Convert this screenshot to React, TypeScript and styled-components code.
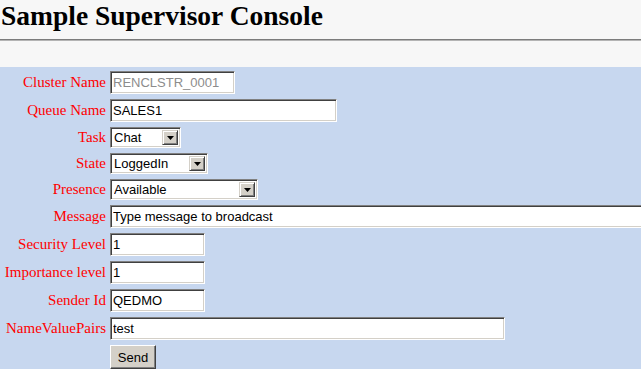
import React from "react";
import styled, { createGlobalStyle } from "styled-components";

type Field =
  | { kind: "text"; label: string; value: string; width: number; disabled?: boolean }
  | { kind: "select"; label: string; value: string; options: string[]; width: number };

const FIELDS: Field[] = [
  { kind: "text", label: "Cluster Name", value: "RENCLSTR_0001", width: 125, disabled: true },
  { kind: "text", label: "Queue Name", value: "SALES1", width: 227 },
  { kind: "select", label: "Task", value: "Chat", options: ["Chat", "Email", "Voice"], width: 71 },
  { kind: "select", label: "State", value: "LoggedIn", options: ["LoggedIn", "LoggedOut"], width: 98 },
  { kind: "select", label: "Presence", value: "Available", options: ["Available", "Busy", "Away"], width: 148 },
  { kind: "text", label: "Message", value: "Type message to broadcast", width: 560 },
  { kind: "text", label: "Security Level", value: "1", width: 95 },
  { kind: "text", label: "Importance level", value: "1", width: 95 },
  { kind: "text", label: "Sender Id", value: "QEDMO", width: 95 },
  { kind: "text", label: "NameValuePairs", value: "test", width: 395 },
];

export default function App() {
  return (
    <>
      <GlobalStyle />
      <Page>
        <Title>Sample Supervisor Console</Title>
        <Rule />
        <Panel>
          <Form onSubmit={(e) => e.preventDefault()}>
            {FIELDS.map((f) => (
              <React.Fragment key={f.label}>
                <Label>{f.label}</Label>
                {f.kind === "text" ? (
                  <TextBox
                    $w={f.width}
                    defaultValue={f.value}
                    disabled={f.disabled}
                  />
                ) : (
                  <SelectBox $w={f.width}>
                    <SelectField defaultValue={f.value}>
                      {f.options.map((o) => (
                        <option key={o}>{o}</option>
                      ))}
                    </SelectField>
                    <ArrowButton>
                      <svg width="7" height="4" viewBox="0 0 7 4">
                        <path d="M0 0h7L3.5 4z" fill="#000" />
                      </svg>
                    </ArrowButton>
                  </SelectBox>
                )}
              </React.Fragment>
            ))}
            <span />
            <SendButton type="submit">Send</SendButton>
          </Form>
        </Panel>
      </Page>
    </>
  );
}

/* ---------------- global ---------------- */

const GlobalStyle = createGlobalStyle`
  html, body {
    margin: 0;
    padding: 0;
    background: #f7f7f7;
  }
  #root {
    min-height: 100vh;
  }
`;

/* ---------------- layout ---------------- */

const Page = styled.div`
  width: 100%;
  height: 369px;
  display: flex;
  flex-direction: column;
  overflow: hidden;
  background: #f7f7f7;
`;

const Title = styled.h1`
  margin: 0;
  padding: 0 0 0 1px;
  height: 39px;
  line-height: 31px;
  font-family: "Liberation Serif", "Times New Roman", serif;
  font-size: 27.5px;
  font-weight: bold;
  color: #000;
`;

const Rule = styled.div`
  height: 0;
  border-top: 1px solid #7c7c7c;
  border-bottom: 1px solid #b4b4b4;
  margin-bottom: 26px;
`;

const Panel = styled.div`
  flex: 1;
  background: #c7d7ef;
  padding-top: 4px;
  overflow: hidden;
`;

const Form = styled.form`
  display: grid;
  grid-template-columns: 106px auto;
  column-gap: 4px;
  row-gap: 5px;
  align-items: center;
  justify-items: start;
`;

const Label = styled.label`
  justify-self: end;
  font-family: "Liberation Serif", "Times New Roman", serif;
  font-size: 15px;
  line-height: 17px;
  color: #ff0000;
  white-space: nowrap;
`;

/* ---------------- controls ---------------- */

const TextBox = styled.input<{ $w: number }>`
  box-sizing: border-box;
  width: ${(p) => p.$w}px;
  height: 23px;
  margin: 0;
  padding: 0 2px;
  font-family: "Liberation Sans", Arial, sans-serif;
  font-size: 13px;
  color: #000;
  background: #fff;
  border: 1px solid;
  border-color: #808080 #fff #fff #808080;
  box-shadow: inset 1px 1px 0 #404040, inset -1px -1px 0 #d4d0c8;
  outline: none;

  &:disabled {
    color: #8c8c8c;
    background: #fff;
  }
`;

const SelectBox = styled.div<{ $w: number }>`
  box-sizing: border-box;
  width: ${(p) => p.$w}px;
  height: 21px;
  display: flex;
  align-items: stretch;
  padding: 2px;
  background: #fff;
  border: 1px solid;
  border-color: #808080 #fff #fff #808080;
  box-shadow: inset 1px 1px 0 #404040, inset -1px -1px 0 #d4d0c8;
`;

const SelectField = styled.select`
  flex: 1;
  min-width: 0;
  margin: 0;
  padding: 0 0 0 1px;
  appearance: none;
  border: none;
  outline: none;
  background: #fff;
  font-family: "Liberation Sans", Arial, sans-serif;
  font-size: 13px;
  color: #000;
`;

const ArrowButton = styled.span`
  box-sizing: border-box;
  width: 16px;
  display: flex;
  align-items: center;
  justify-content: center;
  background: #d4d0c8;
  border: 1px solid;
  border-color: #d4d0c8 #404040 #404040 #d4d0c8;
  box-shadow: inset 1px 1px 0 #fff, inset -1px -1px 0 #808080;
`;

const SendButton = styled.button`
  box-sizing: border-box;
  width: 46px;
  height: 24px;
  margin: 0;
  padding: 0;
  font-family: "Liberation Sans", Arial, sans-serif;
  font-size: 13px;
  color: #000;
  background: #d4d0c8;
  border: 1px solid;
  border-color: #fff #404040 #404040 #fff;
  box-shadow: inset -1px -1px 0 #808080;
`;
